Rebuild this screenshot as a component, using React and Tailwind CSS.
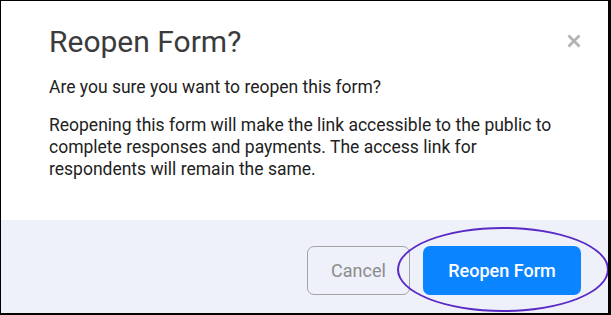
import React from "react";

export default function App() {
  return (
    <div
      className="w-[611px] h-[315px] bg-white border-black border-l border-t border-r-[3px] border-b-2 flex flex-col relative overflow-hidden"
      style={{ fontFamily: "Roboto, 'Liberation Sans', sans-serif" }}
    >
      <div className="flex items-start justify-between pl-[48px] pr-[27px] pt-[23px]">
        <h1 className="text-[30px] leading-[36px] text-[#3b3b3b] font-normal">Reopen Form?</h1>
        <svg width="14" height="14" viewBox="0 0 14 14" className="mt-[10px]">
          <path d="M1.5 1.5 L12.5 12.5 M12.5 1.5 L1.5 12.5" stroke="#b3b3b3" strokeWidth="2.8" strokeLinecap="butt" />
        </svg>
      </div>
      <div className="pl-[48px] pr-[40px] pt-[16px] text-[17.5px] text-[#222] leading-[22px]">
        <p>Are you sure you want to reopen this form?</p>
        <p className="mt-[16px]">
          Reopening this form will make the link accessible to the public to complete responses and payments. The access link for respondents will remain the same.
        </p>
      </div>
      <div className="mt-auto h-[93px] bg-[#eef1fa] flex justify-end items-start pt-[26px] pr-[27px] gap-[13px]">
        <button className="w-[103px] h-[49px] rounded-[7px] border border-[#a3a3a3] text-[18px] text-[#8c8c8c] bg-transparent">
          Cancel
        </button>
        <button className="w-[158px] h-[49px] rounded-[7px] bg-[#0a84ff] text-[18px] font-medium text-white">
          Reopen Form
        </button>
      </div>
      <div className="absolute left-[396px] top-[226px] w-[212px] h-[85px] rounded-[50%] border-2 border-[#5a2bc4] pointer-events-none" />
    </div>
  );
}
